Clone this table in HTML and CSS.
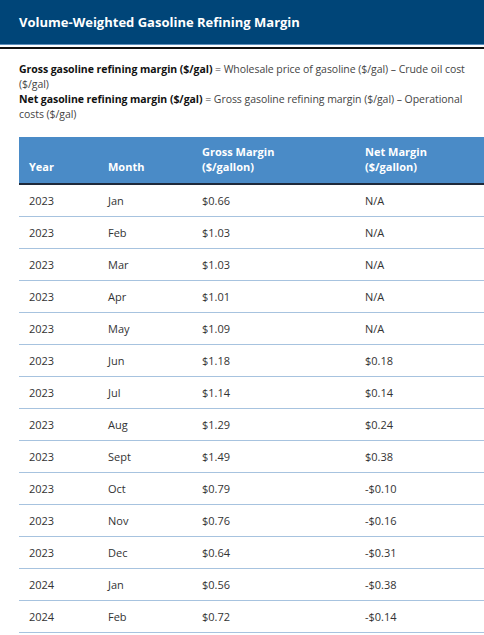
FILE: index.html
```html
<!DOCTYPE html>
<html>
<head>
<meta charset="utf-8">
<link rel="stylesheet" href="styles.css">
</head>
<body>
<header class="banner">
  <h1 class="title">Volume-Weighted Gasoline Refining Margin</h1>
</header>
<div class="rule"></div>
<section class="defs">
  <p><b>Gross gasoline refining margin ($/gal)</b> = Wholesale price of gasoline ($/gal) – Crude oil cost ($/gal)</p>
  <p><b>Net gasoline refining margin ($/gal)</b> = Gross gasoline refining margin ($/gal) – Operational costs ($/gal)</p>
</section>
<table class="data">
  <thead>
    <tr><th class="c-year">Year</th><th class="c-month">Month</th><th class="c-gross">Gross Margin<br>($/gallon)</th><th class="c-net">Net Margin<br>($/gallon)</th></tr>
  </thead>
  <tbody>
    <tr><td>2023</td><td>Jan</td><td>$0.66</td><td>N/A</td></tr>
    <tr><td>2023</td><td>Feb</td><td>$1.03</td><td>N/A</td></tr>
    <tr><td>2023</td><td>Mar</td><td>$1.03</td><td>N/A</td></tr>
    <tr><td>2023</td><td>Apr</td><td>$1.01</td><td>N/A</td></tr>
    <tr><td>2023</td><td>May</td><td>$1.09</td><td>N/A</td></tr>
    <tr><td>2023</td><td>Jun</td><td>$1.18</td><td>$0.18</td></tr>
    <tr><td>2023</td><td>Jul</td><td>$1.14</td><td>$0.14</td></tr>
    <tr><td>2023</td><td>Aug</td><td>$1.29</td><td>$0.24</td></tr>
    <tr><td>2023</td><td>Sept</td><td>$1.49</td><td>$0.38</td></tr>
    <tr><td>2023</td><td>Oct</td><td>$0.79</td><td>-$0.10</td></tr>
    <tr><td>2023</td><td>Nov</td><td>$0.76</td><td>-$0.16</td></tr>
    <tr><td>2023</td><td>Dec</td><td>$0.64</td><td>-$0.31</td></tr>
    <tr><td>2024</td><td>Jan</td><td>$0.56</td><td>-$0.38</td></tr>
    <tr><td>2024</td><td>Feb</td><td>$0.72</td><td>-$0.14</td></tr>
  </tbody>
</table>
</body>
</html>
```
FILE: styles.css
```css
html, body { margin: 0; padding: 0; background: #fff; }
body { font-family: "Open Sans", "Liberation Sans", sans-serif; color: #333; width: 484px; overflow: hidden; }
.banner { background: #004578; height: 44px; display: flex; align-items: center; padding: 0 19px; border-bottom: 1px solid #5d8fbd; }
.title { margin: 0; color: #fff; font-size: 13px; font-weight: 700; letter-spacing: 0; }
.rule { height: 2px; margin-top: 2px; background: #111; }
.defs { padding: 13px 4px 0 19px; font-size: 10.5px; line-height: 15px; color: #444; letter-spacing: -0.05px; }
.defs p { margin: 0; }
.defs b { color: #111; }
.data { margin: 15px 0 0 19px; width: 465px; border-collapse: collapse; font-size: 11px; color: #333; }
.data thead tr { background: #4a8bc7; border-bottom: 2px solid #1f2a3a; }
.data th { color: #fff; font-weight: 700; text-align: left; vertical-align: bottom; padding: 0 0 9px 0; height: 37px; line-height: 15px; }
.data th.c-year { padding-left: 10px; width: 79px; }
.data th.c-month { width: 94px; }
.data th.c-gross { width: 163px; }
.data td { height: 31px; border-bottom: 1px solid #a7c3df; padding: 0; }
.data td:first-child { padding-left: 10px; }
```
